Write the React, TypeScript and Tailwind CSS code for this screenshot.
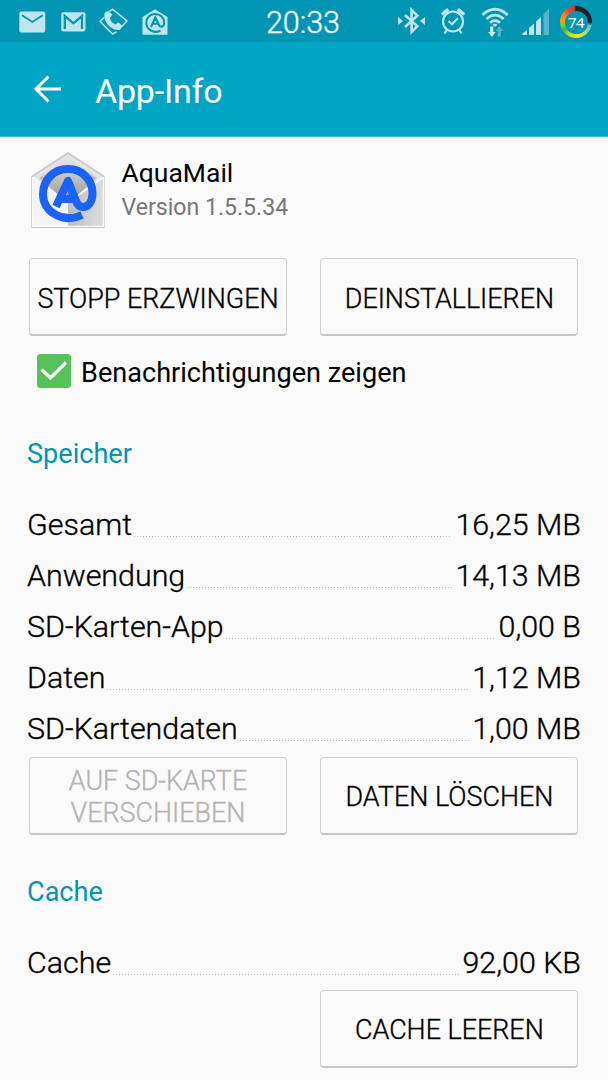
import type { ReactNode } from "react";
import { clsx } from "clsx";

const storageRows = [
  { label: "Gesamt", value: "16,25 MB" },
  { label: "Anwendung", value: "14,13 MB" },
  { label: "SD-Karten-App", value: "0,00 B" },
  { label: "Daten", value: "1,12 MB" },
  { label: "SD-Kartendaten", value: "1,00 MB" },
];

function MailIcon() {
  return (
    <svg className="w-[27px] h-[22px]" viewBox="0 0 27 22" fill="none">
      <rect x="0.3" y="0.5" width="26" height="21" rx="2" fill="#bfe4ec" />
      <path d="M3 4.2L13.4 11L23.8 4.2" stroke="#0095b3" strokeWidth="1.8" />
    </svg>
  );
}

function GmailIcon() {
  return (
    <svg className="w-[25px] h-[20px]" viewBox="0 0 25 20" fill="none">
      <rect x="0.3" y="0.3" width="24.2" height="19.2" rx="2" fill="#bfe4ec" />
      <path d="M3.8 17V4L12.4 11.3L21 4V17" stroke="#0095b3" strokeWidth="2.3" />
    </svg>
  );
}

function CallIcon() {
  return (
    <svg className="w-[30px] h-[28px]" viewBox="0 0 30 28" fill="none">
      <path d="M10.500 3.300L13.500 1.200L28 12.800L22.500 19" stroke="#bfe4ec" strokeWidth="1.500" />
      <path d="M5 9.500L1.200 13.600L13.500 26L17.500 23.800" stroke="#bfe4ec" strokeWidth="1.500" />
      <path d="M5.500 5.200Q8.500 2.500 10 3.200L13 6.500Q13.300 8 10.900 9.600Q11.300 14.500 16.800 16.600Q18.300 14.300 19.600 14.600L23 17.600Q23.500 19.500 20.600 22Q14.500 22.500 9.500 17.500Q4.500 12 5.500 5.200Z" fill="#bfe4ec" />
    </svg>
  );
}

function AquaStatusIcon() {
  return (
    <svg className="w-[26px] h-[26px]" viewBox="0 0 26 26" fill="none">
      <path d="M0.500 8L13 0.300L25.500 8V25.700H0.500Z" fill="#bfe4ec" />
      <path d="M18.500 21.800C12 25 4.300 20.500 4.300 13.800C4.300 8.500 8 5 13 5C18.500 5 22.200 8.800 22.200 13.500C22.200 16 21 17.800 19.300 17.800C17.800 17.800 17.200 16.700 16.600 15.200L13.300 8.500L9 18M10.600 14.800H16" stroke="#0095b3" strokeWidth="2.100" />
    </svg>
  );
}

function BluetoothIcon() {
  return (
    <svg className="w-[27px] h-[28px]" viewBox="0 0 27 28" fill="none">
      <path d="M7 8L19.300 19.300L13.600 25V3L19.300 8.700L7 20" stroke="#bfe4ec" strokeWidth="2.600" />
      <path d="M0 10L5 14L0 18ZM27 10L22 14L27 18Z" fill="#bfe4ec" />
    </svg>
  );
}

function AlarmIcon() {
  return (
    <svg className="w-[26px] h-[28px]" viewBox="0 0 26 28" fill="none" stroke="#bfe4ec">
      <circle cx="13" cy="14.500" r="10" strokeWidth="2.200" />
      <path d="M1.800 7.500L8.300 2.200M24.200 7.500L17.700 2.200" strokeWidth="3.400" />
      <path d="M8.500 14L12 17.300L17.800 11.300" strokeWidth="2" />
      <path d="M7 22.500L4.500 26.500M19 22.500L21.500 26.500" strokeWidth="2.200" />
    </svg>
  );
}

function WifiIcon() {
  return (
    <svg className="w-[28px] h-[31px]" viewBox="0 0 28 31" fill="none">
      <path d="M1.300 8Q14 -3.500 26.700 8M5.300 12Q14 4.200 22.700 12M9 15.800Q14 11.600 19 15.800" stroke="#bfe4ec" strokeWidth="2.700" />
      <path d="M11.500 17.500Q14 15.800 16.500 17.500L14 20Z" fill="#bfe4ec" />
      <path d="M9.300 19.500H12.300V25H14.500L10.800 30L7.100 25H9.300Z" fill="#e4f5f8" />
      <path d="M16.800 29.500H19.800V24H22.500L18.300 19L14.600 24H16.800Z" fill="#58b5c9" />
    </svg>
  );
}

function SignalIcon() {
  return (
    <svg className="w-[28px] h-[28px]" viewBox="0 0 28 28">
      <path d="M0.300 27V25.500L5 22V27Z" fill="#bfe4ec" />
      <path d="M7 27V20L12 15.500V27Z" fill="#bfe4ec" />
      <path d="M14 27V13.500L19 9V27Z" fill="#bfe4ec" />
      <path d="M21.500 27V6L27 0.800V27Z" fill="#58b5c9" />
    </svg>
  );
}

function BatteryRing() {
  return (
    <div className="flex size-8 items-center justify-center rounded-full bg-[conic-gradient(#222_0_25%,#58c4d8_29%,#a8dc80_38%,#ffe600_48%,#b8e020_58%,#35b84a_66%,#80c830_71%,#ff9a00_77%,#ff7a20_84%,#f04030_92%,#e03030_98%,#222_100%)]">
      <div className="flex size-[23px] items-center justify-center rounded-full bg-[#0095b3]">
        <span className="font-['Noto_Sans'] text-[15px] leading-none tracking-[-0.5px] text-white">74</span>
      </div>
    </div>
  );
}

function AquaMailLogo() {
  return (
    <svg className="h-[78px] w-[76px]" viewBox="0 0 76 78" fill="none">
      <defs>
        <linearGradient id="flap" x1="0" y1="0" x2="0" y2="1">
          <stop offset="0" stopColor="#e6e6e6" />
          <stop offset="1" stopColor="#929292" />
        </linearGradient>
        <linearGradient id="side" x1="0" y1="0" x2="1" y2="0">
          <stop offset="0" stopColor="#bdbdbd" />
          <stop offset="1" stopColor="#dedede" />
        </linearGradient>
      </defs>
      <path d="M2 25.500L38 2L74 25.500V76H2Z" fill="#e4e4e4" stroke="#c9c9c9" strokeWidth="1.500" />
      <path d="M9 27L38 7L67 27L38 52Z" fill="url(#flap)" />
      <path d="M2.500 26L38 52V76H2.500Z" fill="#f4f4f4" />
      <path d="M73.500 26L38 52V76H73.500Z" fill="url(#side)" />
      <path d="M3 26L38 52L73.500 26M2.700 26V75.500H73.500V26" stroke="#fafafa" strokeWidth="1.400" />
      <path d="M1.500 76.500H74.500" stroke="#c4c4c4" strokeWidth="1.200" />
      <path d="M52 64C34 72.500 13 61.500 13 43.500C13 28.500 24 18 38 18C52 18 62.500 29 62.500 42C62.500 50.500 58.500 56 53 56C49 56 47 53 45.500 49L38 30L26 55.500M31 48H45" stroke="#1b62f8" strokeWidth="8" strokeLinejoin="round" />
    </svg>
  );
}

function Button({ children, disabled }: { children: ReactNode; disabled?: boolean }) {
  return (
    <button
      disabled={disabled}
      className={clsx(
        "h-[78px] w-[258px] rounded-[4px] border border-[#d2d2d2] border-b-2 border-b-[#c6c6c6] pt-[4px] text-[26.900px] font-light leading-8 whitespace-nowrap [-webkit-text-stroke:0.35px_currentColor]",
        disabled ? "text-[#b4b4b4]" : "text-black"
      )}
    >
      {children}
    </button>
  );
}

function Row({ label, value }: { label: string; value: string }) {
  return (
    <div className="flex h-[51px] items-center text-[30.400px] font-light text-black [-webkit-text-stroke:0.35px_currentColor]">
      <span>{label}</span>
      <span className="ml-[2px] mr-[3px] mt-[24px] h-px flex-1 bg-[repeating-linear-gradient(90deg,#bdbdbd_0_1px,transparent_1px_3px)]" />
      <span>{value}</span>
    </div>
  );
}

export default function App() {
  return (
    <div className="h-[1080px] w-[608px] overflow-hidden bg-[#fafafa] font-['Roboto',sans-serif]">
      {/* Status bar */}
      <div className="grid h-[42px] grid-cols-[1fr_auto_1fr] items-center bg-[#0095b3]">
        <div className="flex items-center gap-[13px] pl-[19px] pt-px">
          <div className="mr-[2px]">
            <MailIcon />
          </div>
          <GmailIcon />
          <CallIcon />
          <AquaStatusIcon />
        </div>
        <span className="pr-[2px] pt-[4px] text-[30.500px] font-light leading-none text-white [-webkit-text-stroke:0.35px_currentColor]">20:33</span>
        <div className="flex items-center justify-end pr-4 pt-[2px]">
          <div className="flex gap-[15px]">
            <BluetoothIcon />
            <AlarmIcon />
            <WifiIcon />
          </div>
          <div className="ml-[13px] mr-[10px]">
            <SignalIcon />
          </div>
          <BatteryRing />
        </div>
      </div>

      {/* Action bar */}
      <header className="flex h-[95px] items-center border-b border-[#45bbd1] bg-[#00a5c5] pl-[33px]">
        <svg className="h-[28px] w-[28px]" viewBox="0 0 28 28" fill="none" stroke="white" strokeWidth="3">
          <path d="M28 14H3M15.500 1.500L3 14L15.500 26.500" />
        </svg>
        <h1 className="pl-[34px] pt-[5px] text-[34px] tracking-[-0.2px] text-white">App-Info</h1>
      </header>

      <main className="px-[27px]">
        <div className="flex pl-[2.500px] pt-[14px]">
          <AquaMailLogo />
          <div className="pl-4 pt-[5px]">
            <div className="text-[26.500px] leading-[34px] text-black">AquaMail</div>
            <div className="text-[23.100px] leading-[35px] text-[#777777]">Version 1.5.5.34</div>
          </div>
        </div>

        <div className="mt-[29px] flex justify-between pl-[2px] pr-[2.600px]">
          <Button>STOPP ERZWINGEN</Button>
          <Button>DEINSTALLIEREN</Button>
        </div>

        <label className="mt-[18px] flex h-[34px] items-center pl-[10px]">
          <svg className="size-[34px]" viewBox="0 0 34 34" fill="none">
            <rect width="34" height="34" rx="3.500" fill="#55c25a" />
            <path d="M4.500 15.500L13.500 24L29 8.500" stroke="white" strokeWidth="3.300" />
          </svg>
          <span className="pl-[10px] pt-[4px] text-[27.100px] text-black">Benachrichtigungen zeigen</span>
        </label>

        <h2 className="mt-[46px] h-[40px] text-[27.100px] leading-[40px] text-[#0095b3]">Speicher</h2>
        <div className="mt-[25px]">
          {storageRows.map((row) => (
            <Row key={row.label} label={row.label} value={row.value} />
          ))}
        </div>
        <div className="mt-[2.600px] flex justify-between pl-[2px] pr-[2.600px]">
          <Button disabled>
            AUF SD-KARTE
            <br />
            VERSCHIEBEN
          </Button>
          <Button>DATEN LÖSCHEN</Button>
        </div>

        <h2 className="mt-[37.400px] h-[40px] text-[27.100px] leading-[40px] text-[#0095b3]">Cache</h2>
        <div className="mt-[25px]">
          <Row label="Cache" value="92,00 KB" />
        </div>
        <div className="mt-[1.600px] flex justify-end pr-[2.600px]">
          <Button>CACHE LEEREN</Button>
        </div>
      </main>
    </div>
  );
}
